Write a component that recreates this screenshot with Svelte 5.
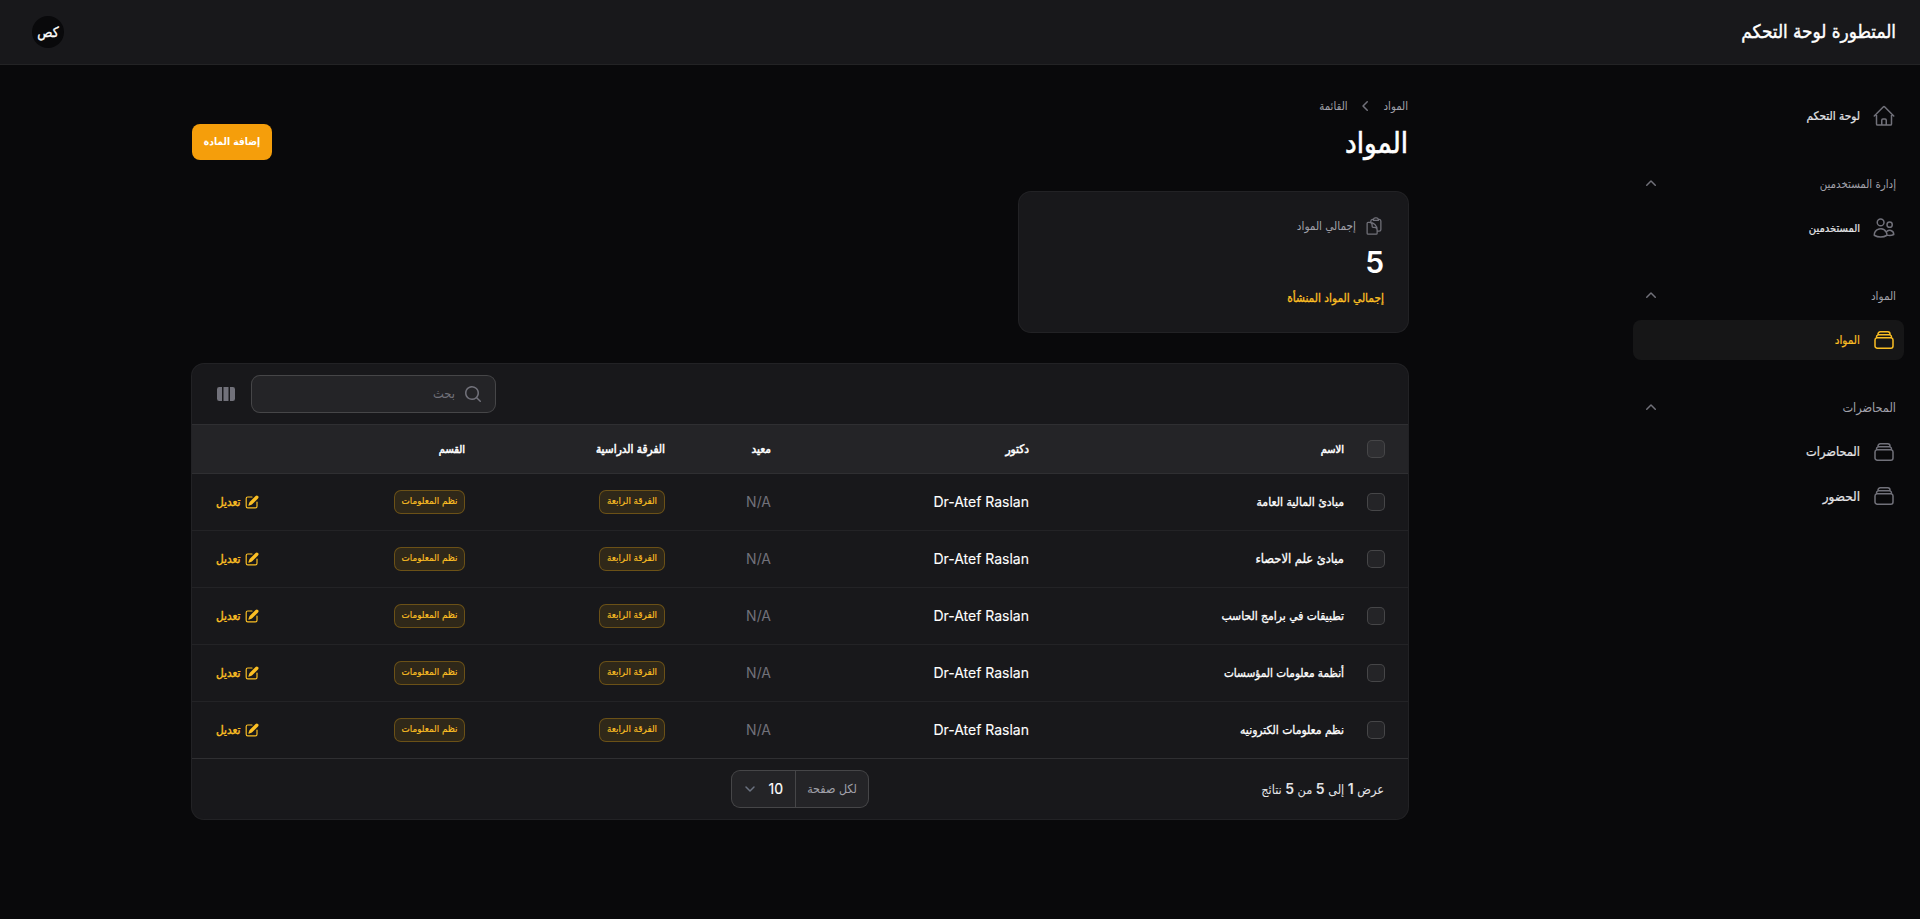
<script>
  const rows = [
    { name: 'مبادئ المالية العامة', size: 12.1 },
    { name: 'مبادئ علم الاحصاء', size: 12.8 },
    { name: 'تطبيقات في برامج الحاسب', size: 12 },
    { name: 'أنظمة معلومات المؤسسات', size: 11.7 },
    { name: 'نظم معلومات الكترونيه', size: 12 }
  ];
  const groups = [
    { label: null, items: [{ text: 'لوحة التحكم', icon: 'home', size: 11.8 }] },
    { label: 'إدارة المستخدمين', size: 11.4, items: [{ text: 'المستخدمين', icon: 'users', size: 11.1 }] },
    { label: 'المواد', size: 11.6, items: [{ text: 'المواد', icon: 'stack', size: 11.7, active: true }] },
    { label: 'المحاضرات', size: 12.6, items: [{ text: 'المحاضرات', icon: 'stack', size: 12.7 }, { text: 'الحضور', icon: 'stack', size: 13.4 }] }
  ];
  const outline = {
    home: 'm2.25 12 8.954-8.955c.44-.439 1.152-.439 1.591 0L21.75 12M4.5 9.75v10.125c0 .621.504 1.125 1.125 1.125H9.75v-4.875c0-.621.504-1.125 1.125-1.125h2.25c.621 0 1.125.504 1.125 1.125V21h4.125c.621 0 1.125-.504 1.125-1.125V9.75M8.25 21h8.25',
    users: 'M15 19.128a9.38 9.38 0 0 0 2.625.372 9.337 9.337 0 0 0 4.121-.952 4.125 4.125 0 0 0-7.533-2.493M15 19.128v-.003c0-1.113-.285-2.16-.786-3.07M15 19.128v.106A12.318 12.318 0 0 1 8.624 21c-2.331 0-4.512-.645-6.374-1.766l-.001-.109a6.375 6.375 0 0 1 11.964-3.07M12 6.375a3.375 3.375 0 1 1-6.75 0 3.375 3.375 0 0 1 6.75 0Zm8.25 2.25a2.625 2.625 0 1 1-5.25 0 2.625 2.625 0 0 1 5.25 0Z',
    stack: 'M6 6.878V6a2.25 2.25 0 0 1 2.25-2.25h7.5A2.25 2.25 0 0 1 18 6v.878m-12 0c.235-.083.487-.128.75-.128h10.5c.263 0 .515.045.75.128m-12 0A2.25 2.25 0 0 0 4.5 9v.878m13.5-3A2.25 2.25 0 0 1 19.5 9v.878m0 0a2.246 2.246 0 0 0-.75-.128H5.25c-.263 0-.515.045-.75.128m15 0A2.25 2.25 0 0 1 21 12v6a2.25 2.25 0 0 1-2.25 2.25H5.25A2.25 2.25 0 0 1 3 18v-6c0-.98.626-1.813 1.5-2.122',
    clipboard: 'M8.25 7.5V6.108c0-1.135.845-2.098 1.976-2.192.373-.03.748-.057 1.123-.08M15.75 18H18a2.25 2.25 0 0 0 2.25-2.25V6.108c0-1.135-.845-2.098-1.976-2.192a48.424 48.424 0 0 0-1.123-.08M15.75 18.75v-1.875a3.375 3.375 0 0 0-3.375-3.375h-1.5a1.125 1.125 0 0 1-1.125-1.125v-1.5A3.375 3.375 0 0 0 6.375 7.5H5.25m11.9-3.664A2.251 2.251 0 0 0 15 2.25h-1.5a2.251 2.251 0 0 0-2.15 1.586m5.8 0c.065.21.1.433.1.664v.75h-6V4.5c0-.231.035-.454.1-.664M6.75 7.5H4.875c-.621 0-1.125.504-1.125 1.125v12c0 .621.504 1.125 1.125 1.125h9.75c.621 0 1.125-.504 1.125-1.125V16.5a9 9 0 0 0-9-9Z'
  };
  const solid = {
    up: 'M9.47 6.47a.75.75 0 0 1 1.06 0l4.25 4.25a.75.75 0 1 1-1.06 1.06L10 8.06l-3.72 3.72a.75.75 0 0 1-1.06-1.06l4.25-4.25Z',
    left: 'M11.78 5.22a.75.75 0 0 1 0 1.06L8.06 10l3.72 3.72a.75.75 0 1 1-1.06 1.06l-4.25-4.25a.75.75 0 0 1 0-1.06l4.25-4.25a.75.75 0 0 1 1.06 0Z',
    search: 'M9 3.5a5.5 5.5 0 1 0 0 11 5.5 5.5 0 0 0 0-11ZM2 9a7 7 0 1 1 12.452 4.391l3.328 3.329a.75.75 0 1 1-1.06 1.06l-3.329-3.328A7 7 0 0 1 2 9Z',
    columns: 'M14 17h2.75A2.25 2.25 0 0 0 19 14.75v-9.5A2.25 2.25 0 0 0 16.75 3H14v14ZM12.5 3h-5v14h5V3ZM3.25 3H6v14H3.25A2.25 2.25 0 0 1 1 14.75v-9.5A2.25 2.25 0 0 1 3.25 3Z',
    edit: 'm5.433 13.917 1.262-3.155A4 4 0 0 1 7.58 9.42l6.92-6.918a2.121 2.121 0 0 1 3 3l-6.92 6.918c-.383.383-.84.685-1.343.886l-3.154 1.262a.5.5 0 0 1-.65-.65ZM3.5 5.75c0-.69.56-1.25 1.25-1.25H10A.75.75 0 0 0 10 3H4.75A2.75 2.75 0 0 0 2 5.75v9.5A2.75 2.75 0 0 0 4.75 18h9.5A2.75 2.75 0 0 0 17 15.25V10a.75.75 0 0 0-1.5 0v5.25c0 .69-.56 1.25-1.25 1.25h-9.5c-.69 0-1.25-.56-1.25-1.25v-9.5Z'
  };
</script>

{#snippet line(name, size)}
  <svg class="ico" width={size} height={size} viewBox="0 0 24 24" fill="none" stroke="currentColor" stroke-width="1.5" stroke-linecap="round" stroke-linejoin="round"><path d={outline[name]} /></svg>
{/snippet}
{#snippet fill(name, size)}
  <svg class="ico" width={size} height={size} viewBox="0 0 20 20" fill="currentColor"><path fill-rule="evenodd" clip-rule="evenodd" d={solid[name]} /></svg>
{/snippet}

<div class="page" dir="rtl">
  <header class="topbar">
    <div class="brand">المتطورة لوحة التحكم</div>
    <div class="avatar"><span>كص</span></div>
  </header>
  <div class="body">
    <nav class="sidebar">
      {#each groups as g}
        <div class="group">
          {#if g.label}
            <div class="group-head" style:font-size="{g.size}px"><span>{g.label}</span>{@render fill('up', 20)}</div>
          {/if}
          {#each g.items as it}
            <div class="item" class:active={it.active} style:font-size="{it.size}px">{@render line(it.icon, 24)}<span>{it.text}</span></div>
          {/each}
        </div>
      {/each}
    </nav>
    <main>
      <div class="heading">
        <div>
          <div class="crumbs"><span>المواد</span>{@render fill('left', 20)}<span>القائمة</span></div>
          <h1>المواد</h1>
        </div>
        <button class="add">إضافة المادة</button>
      </div>

      <section class="stat">
        <div class="stat-label">{@render line('clipboard', 20)}<span>إجمالي المواد</span></div>
        <div class="stat-value">5</div>
        <div class="stat-desc">إجمالي المواد المنشأة</div>
      </section>

      <section class="table">
        <div class="toolbar">
          <div class="search">{@render fill('search', 20)}<span>بحث</span></div>
          <div class="cols">{@render fill('columns', 20)}</div>
        </div>
        <div class="row head">
          <div class="check"><i></i></div>
          <div>الاسم</div>
          <div class="wide">دكتور</div>
          <div class="wide">معيد</div>
          <div class="wide">الفرقة الدراسية</div>
          <div>القسم</div>
          <div></div>
        </div>
        {#each rows as r}
          <div class="row">
            <div class="check"><i></i></div>
            <div class="name" style:font-size="{r.size}px">{r.name}</div>
            <div class="doctor" dir="ltr">Dr-Atef Raslan</div>
            <div class="na" dir="ltr">N/A</div>
            <div><span class="badge level">الفرقة الرابعة</span></div>
            <div><span class="badge dept">نظم المعلومات</span></div>
            <div class="edit">{@render fill('edit', 16)}<span>تعديل</span></div>
          </div>
        {/each}
        <div class="footer">
          <div class="summary">عرض <b>1</b> إلى <b>5</b> من <b>5</b> نتائج</div>
          <div class="perpage">
            <div class="pp-label">لكل صفحة</div>
            <div class="pp-value"><span>10</span>
              <svg class="ico" width="20" height="20" viewBox="0 0 20 20" fill="none" stroke="currentColor" stroke-width="1.5" stroke-linecap="round" stroke-linejoin="round"><path d="m6 8 4 4 4-4" /></svg>
            </div>
          </div>
          <div></div>
        </div>
      </section>
    </main>
  </div>
</div>

<style>
  :global(body) { background: #09090b; overflow: hidden; }
  .page { height: 919px; font-family: Inter, "DejaVu Sans Condensed", "DejaVu Sans", sans-serif; font-size: 14px; line-height: 20px; color: #fff; background: #09090b; white-space: nowrap; }
  .ico { flex: none; display: block; }
  .topbar { height: 64px; box-sizing: border-box; padding: 0 24px 0 32px; display: flex; align-items: center; justify-content: space-between; background: #18181b; box-shadow: 0 1px 0 #232325; }
  .brand { font-size: 18.8px; -webkit-text-stroke: 0.4px; }
  .avatar { width: 32px; height: 32px; border-radius: 50%; background: #09090b; display: flex; align-items: center; justify-content: center; font-size: 14px; -webkit-text-stroke: 0.3px; }
  .body { display: flex; align-items: flex-start; }
  .sidebar { flex: none; width: 271px; padding: 32px 16px 0 33px; display: flex; flex-direction: column; gap: 28px; }
  .group { display: flex; flex-direction: column; gap: 4px; }
  .group-head, .item { height: 40px; box-sizing: border-box; padding: 8px; display: flex; align-items: center; }
  .group-head { justify-content: space-between; color: #a1a1aa; }
  .group-head .ico, .item .ico { color: #71717a; }
  .item { gap: 12px; border-radius: 8px; color: #e4e4e7; }
  .item span { -webkit-text-stroke: 0.2px; }
  .item.active { background: #161617; }
  .item.active, .item.active .ico { color: #fbbf24; }
  main { flex: 1; padding: 32px 192px 0; }
  .heading { height: 64px; display: flex; justify-content: space-between; }
  .crumbs { height: 20px; display: flex; align-items: center; gap: 8px; color: #a1a1aa; font-size: 11.3px; }
  .crumbs .ico { color: #71717a; }
  h1 { margin: 9px 0 0; font-size: 29.2px; line-height: 36px; font-weight: 400; -webkit-text-stroke: 0.6px; }
  .add { margin: 28px 0 0; width: 80px; height: 36px; padding: 0 0 2px; border: 0; border-radius: 8px; background: #f59e0b; color: #fff; font: bold 10.2px "DejaVu Sans Condensed", "DejaVu Sans", sans-serif; }
  .stat { margin-top: 32px; width: 389.33px; height: 140px; box-sizing: border-box; padding: 24px; border-radius: 12px; background: #18181b; box-shadow: 0 0 0 1px #222225; }
  .stat-label { height: 20px; display: flex; align-items: center; gap: 8px; color: #a1a1aa; font-size: 11.7px; }
  .stat-label .ico { color: #71717a; }
  .stat-value { margin-top: 8px; font-size: 30px; line-height: 36px; font-weight: 600; }
  .stat-desc { margin-top: 8px; color: #fbbf24; font-size: 11.8px; -webkit-text-stroke: 0.3px; }
  .table { margin-top: 32px; border-radius: 12px; background: #18181b; box-shadow: 0 0 0 1px #222225; overflow: hidden; }
  .toolbar { height: 60px; box-sizing: border-box; padding: 12px 24px; display: flex; justify-content: flex-end; gap: 16px; align-items: center; }
  .search { width: 243px; height: 36px; box-sizing: border-box; padding: 0 12px; border-radius: 8px; background: #242427; box-shadow: 0 0 0 1px #464648; display: flex; align-items: center; gap: 8px; color: #71717a; font-size: 12.8px; }
  .cols { color: #71717a; }
  .row { display: grid; grid-template-columns: 52px 315px 258px 106px 200px 1fr 110px; height: 57px; box-sizing: border-box; border-top: 1px solid #232326; align-items: center; }
  .row > div { padding: 0 12px; }
  .row.head { height: 49px; background: #242427; border-top-color: #2f2f32; font-size: 11px; -webkit-text-stroke: 0.5px; }
  .head > .wide { font-size: 11.8px; }
  .row.head + .row { border-top-color: #2f2f32; }
  .row > .check { padding: 0 24px 0 12px; }
  .check i { display: block; width: 16px; height: 16px; border-radius: 4px; background: #242427; box-shadow: 0 0 0 1px #464648; }
  .head .check i { background: #2f2f32; }
  .name { -webkit-text-stroke: 0.3px; }
  .doctor, .na { text-align: right; }
  .doctor { -webkit-text-stroke: 0.1px; }
  .na { color: #71717a; }
  .badge { display: inline-flex; align-items: center; justify-content: center; height: 22px; box-sizing: border-box; padding-bottom: 2px; margin-right: 1px; border-radius: 6px; background: #2f2819; box-shadow: 0 0 0 1px #6b5117; color: #fbbf24; font-size: 9.8px; vertical-align: middle; -webkit-text-stroke: 0.15px; }
  .level { width: 64px; }
  .dept { width: 69px; }
  .row > .edit { display: flex; align-items: center; justify-content: flex-end; gap: 4px; padding: 0 0 0 24px; color: #fbbf24; font-size: 11.7px; -webkit-text-stroke: 0.4px; }
  .edit .ico { -webkit-text-stroke: 0; }
  .footer { height: 61px; box-sizing: border-box; border-top: 1px solid #2f2f32; padding: 0 24px; display: grid; grid-template-columns: 1fr auto 1fr; align-items: center; }
  .summary { color: #e4e4e7; font-size: 12.6px; }
  .summary b { font-size: 14px; font-weight: 600; }
  .perpage { width: 136px; height: 36px; border-radius: 8px; background: #242427; box-shadow: 0 0 0 1px #464648; display: flex; overflow: hidden; }
  .pp-label { width: 72px; border-left: 1px solid #464648; display: flex; align-items: center; justify-content: center; color: #a1a1aa; font-size: 12.4px; }
  .pp-value { flex: 1; display: flex; align-items: center; justify-content: flex-start; gap: 8px; padding-right: 12px; -webkit-text-stroke: 0.15px; }
  .pp-value .ico { color: #6b7280; }
</style>
